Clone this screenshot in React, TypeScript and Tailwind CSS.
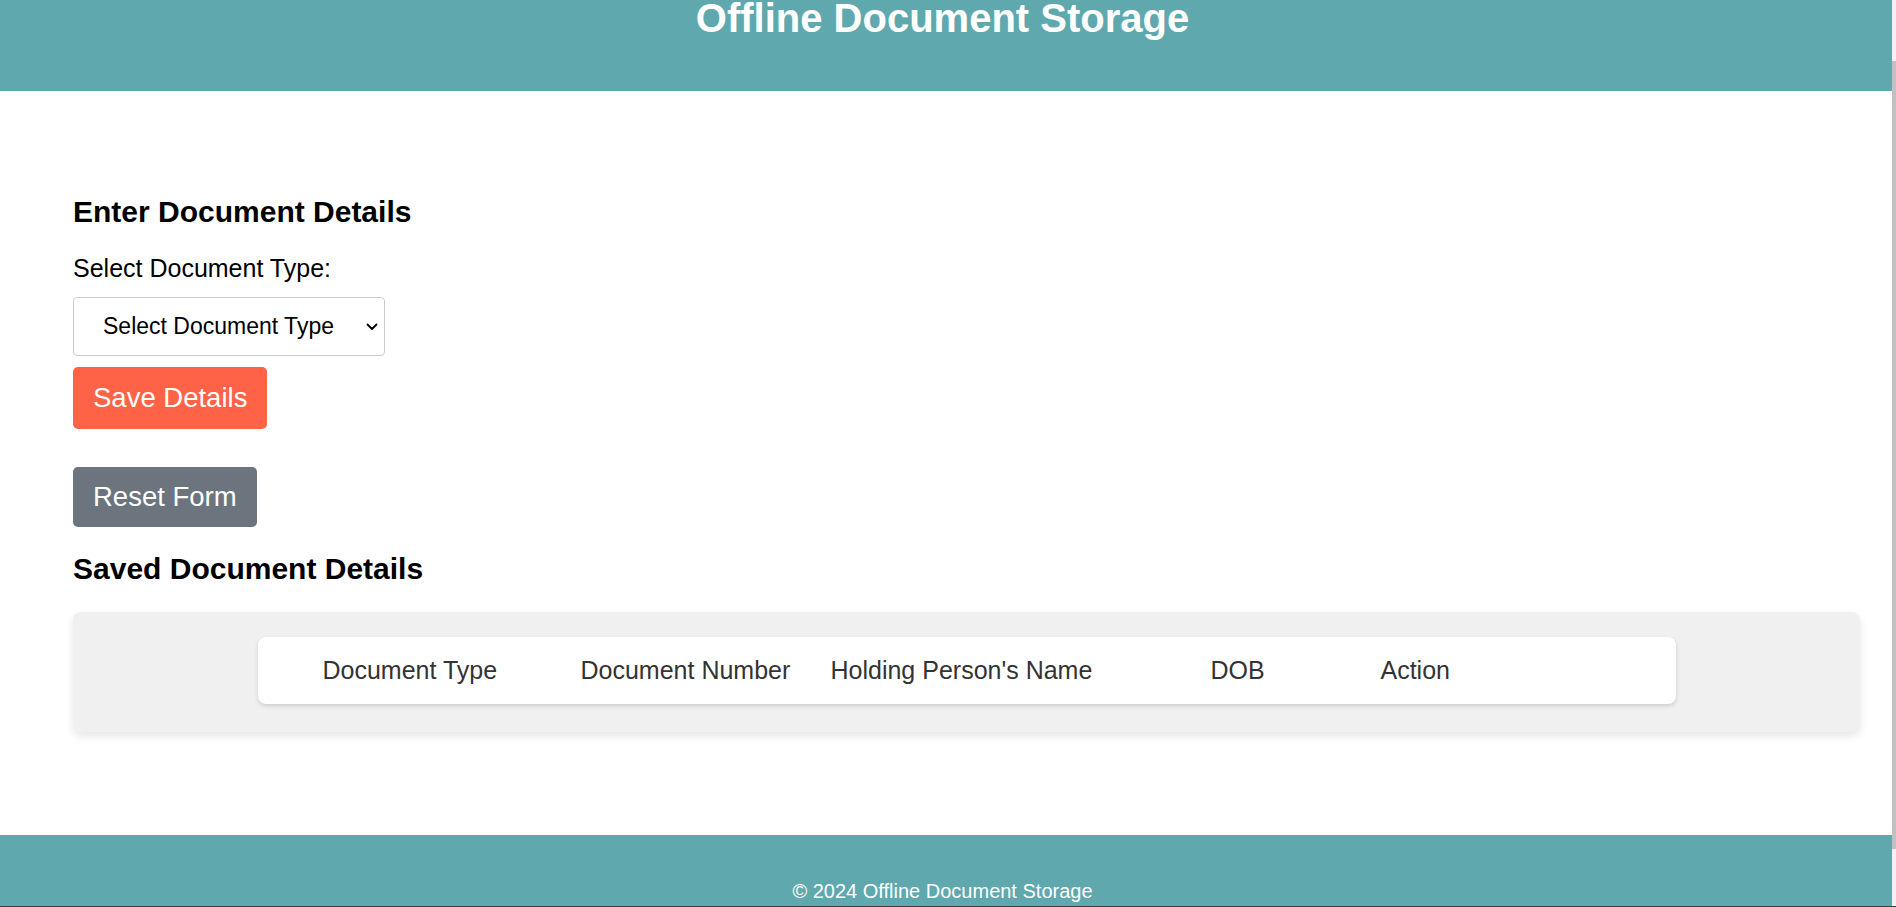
import React from 'react';

const columns = ['Document Type', 'Document Number', "Holding Person's Name", 'DOB', 'Action'];

function Chevron() {
  return (
    <svg width="12" height="8" viewBox="0 0 12 8" className="ml-auto shrink-0">
      <polyline points="1.5,1.5 6,6 10.5,1.5" fill="none" stroke="#000" strokeWidth="1.8" strokeLinecap="round" strokeLinejoin="round" />
    </svg>
  );
}

export default function App() {
  return (
    <div className="flex h-[907px] w-full overflow-hidden border-b border-[#3c3c3c] bg-white font-['Liberation_Sans',Arial,sans-serif] text-black">
      <div className="flex min-w-0 flex-1 flex-col">
        <header className="h-[91px] shrink-0 bg-[#5ea8ae] pr-[7px] text-center">
          <h1 className="text-[40px] font-bold leading-[36px] text-white">Offline Document Storage</h1>
        </header>

        <main className="shrink-0 pb-[103px] pl-[73px] pr-[32px] pt-[103px]">
          <h2 className="text-[30px] font-bold leading-[36px]">Enter Document Details</h2>

          <label className="mt-[23px] block text-[25px] leading-[30px]">Select Document Type:</label>

          <div className="mt-[14px] flex h-[59px] w-[312px] items-center rounded-[4px] border border-[#cccccc] bg-white pl-[29px] pr-[6px]">
            <span className="text-[23px] leading-none">Select Document Type</span>
            <Chevron />
          </div>

          <button className="mt-[11px] flex h-[62px] items-center rounded-[5px] bg-[#ff6347] px-[20px] text-[27.5px] leading-none text-white">
            Save Details
          </button>

          <button className="mt-[38px] flex h-[60px] items-center rounded-[5px] bg-[#6c757d] px-[20px] text-[27.5px] leading-none text-white">
            Reset Form
          </button>

          <h2 className="mt-[24px] text-[30px] font-bold leading-[36px]">Saved Document Details</h2>

          <div className="mt-[25px] h-[120px] rounded-[8px] bg-[#f0f0f0] pt-[25px] shadow-[0_4px_8px_rgba(0,0,0,0.1)]">
            <div className="mx-auto grid h-[67px] w-[1418px] grid-cols-[258px_250px_380px_170px_1fr] items-center rounded-[8px] bg-white pl-[65px] text-[25px] text-[#333333] shadow-[0_2px_4px_rgba(0,0,0,0.15)]">
              {columns.map((c) => (
                <span key={c} className="whitespace-nowrap">
                  {c}
                </span>
              ))}
            </div>
          </div>
        </main>

        <footer className="flex-1 bg-[#5ea8ae] pr-[7px] pt-[44px] text-center">
          <p className="text-[20px] leading-[24px] text-white">© 2024 Offline Document Storage</p>
        </footer>
      </div>

      <div className="w-[4px] shrink-0 bg-[#f1f1f1] pt-[61px]">
        <div className="h-[788px] bg-[#c1c1c1]" />
      </div>
    </div>
  );
}
